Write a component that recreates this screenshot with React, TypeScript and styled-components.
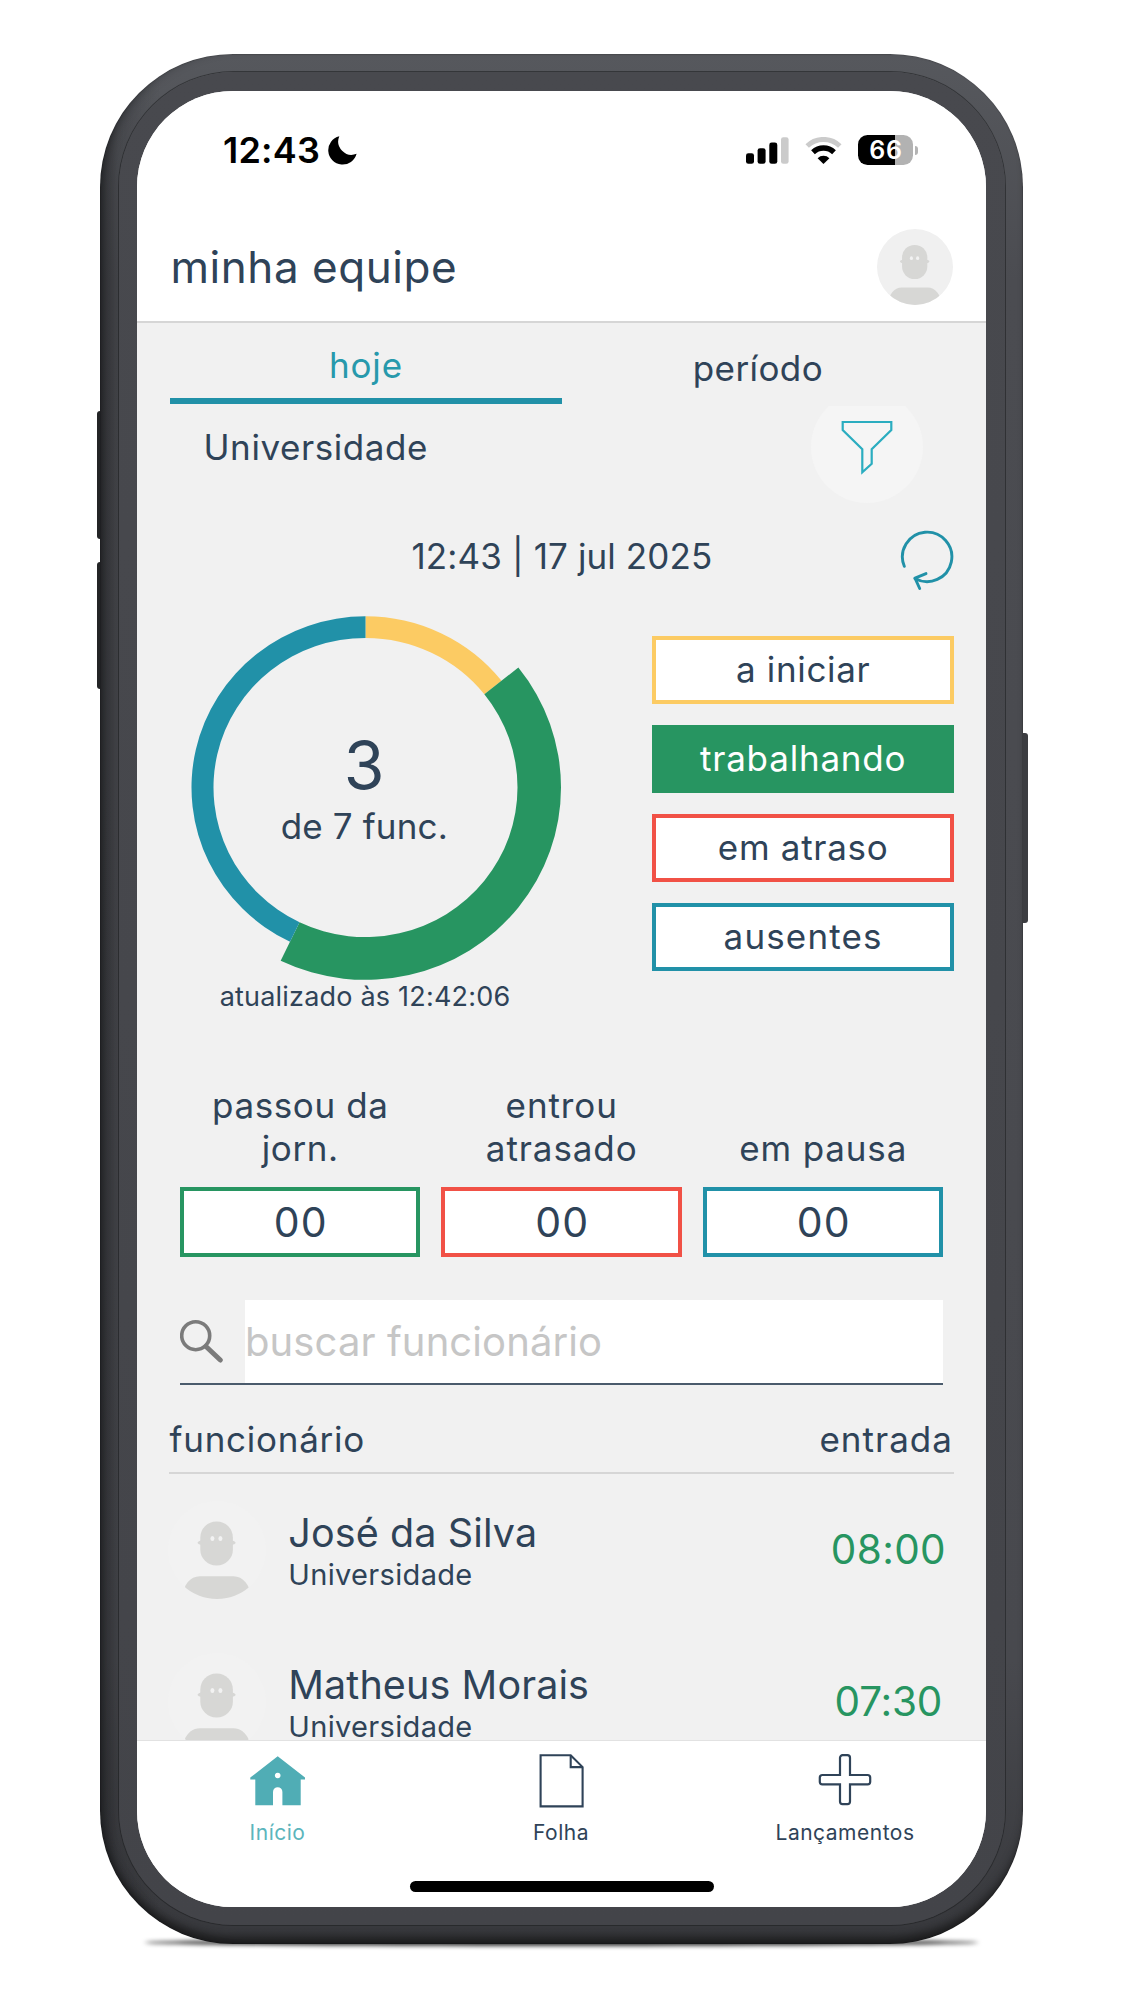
import React from "react";
import styled, { createGlobalStyle } from "styled-components";

const c = {
  ink: "#2f4358",
  teal: "#2191a8",
  green: "#279561",
  yellow: "#fccb63",
  red: "#f15146",
  navTeal: "#50adb5",
  canvas: "#f1f1f1",
  rule: "#d6d6d6",
  figure: "#d7d7d5",
};

const GlobalStyle = createGlobalStyle`
  * { box-sizing: border-box; }
  body { margin: 0; background: #fff; font-family: "Inter", "Roboto", sans-serif; color: ${c.ink}; }
  svg { display: block; flex: none; }
`;

const Page = styled.main`
  width: 1125px;
  height: 2000px;
  padding: 53.5px 0 0 100px;
  overflow: hidden;
  background: #fff;
`;

/* ---------- device ---------- */

const Phone = styled.div`
  position: relative;
  z-index: 0;
  width: 923.4px;
  height: 1890px;
`;

const GroundShadow = styled.div`
  position: absolute;
  z-index: -2;
  left: 44px;
  right: 44px;
  bottom: -2px;
  height: 7px;
  border-radius: 50%;
  background: rgba(0, 0, 0, 0.8);
  filter: blur(2px);
`;

const SideKey = styled.span<{ $side: "left" | "right"; $top: number; $height: number }>`
  position: absolute;
  z-index: -1;
  ${(p) => p.$side}: ${(p) => (p.$side === "left" ? -3 : -4.5)}px;
  top: ${(p) => p.$top}px;
  width: 12px;
  height: ${(p) => p.$height}px;
  border-radius: 3px;
  background: ${(p) => (p.$side === "left" ? "#232426" : "#3c3d41")};
`;

const Shell = styled.div`
  height: 100%;
  padding: 18.5px;
  border-radius: 133px;
  background:
    linear-gradient(90deg, rgba(24, 25, 27, 0.5), rgba(24, 25, 27, 0.2) 18px, transparent 60px),
    linear-gradient(#56585d, #4b4c51 12%, #48494e 85%, #38393d);
  box-shadow:
    inset 0 0 1px 0.5px rgba(0, 0, 0, 0.25),
    inset 10px 0 10px -7px rgba(20, 21, 23, 0.5),
    inset 0 -12px 10px -5px rgba(20, 20, 20, 0.8);
`;

const Bezel = styled.div`
  height: 100%;
  padding: 18.5px;
  border-radius: 115px;
  background: linear-gradient(#48494e, #46474c 50%, #434449);
  box-shadow: 0 0 0 1px rgba(30, 31, 34, 0.6);
`;

const Screen = styled.div`
  display: flex;
  flex-direction: column;
  height: 100%;
  overflow: hidden;
  border-radius: 96px;
  background: ${c.canvas};
`;

/* ---------- top ---------- */

const StatusBar = styled.div`
  flex: none;
  display: flex;
  align-items: center;
  justify-content: space-between;
  height: 119px;
  padding: 0 68px 0 86px;
  background: #fff;
  color: #000;
`;

const StatusGroup = styled.div<{ $gap: number }>`
  display: flex;
  align-items: center;
  gap: ${(p) => p.$gap}px;
`;

const Clock = styled.span`
  font-size: 36px;
  font-weight: 600;
  line-height: 40px;
  letter-spacing: 0.2px;
`;

const BatteryWrap = styled.div`
  display: flex;
  align-items: center;
  gap: 1.5px;
  &::after {
    content: "";
    width: 3.5px;
    height: 9px;
    border-radius: 0 4px 4px 0;
    background: #b4b4b4;
  }
`;

const Battery = styled.span`
  width: 55px;
  height: 30px;
  border-radius: 9.5px;
  background: linear-gradient(90deg, #000 67.5%, #b2b2b2 67.5%);
  color: #fff;
  font-size: 25px;
  font-weight: 600;
  line-height: 30px;
  letter-spacing: 0.6px;
  text-align: center;
`;

const Header = styled.header`
  flex: none;
  display: flex;
  align-items: center;
  justify-content: space-between;
  height: 113.5px;
  padding: 4px 33px 0 33.5px;
  border-bottom: 2.5px solid ${c.rule};
  background: #fff;
`;

const Title = styled.h1`
  margin: 0;
  font-size: 44px;
  font-weight: 400;
  line-height: 54px;
  letter-spacing: 0.55px;
`;

const Text = styled.span<{ $ls?: number }>`
  font-size: 35px;
  line-height: 43.3px;
  letter-spacing: ${(p) => p.$ls ?? 0.7}px;
  white-space: nowrap;
`;

/* ---------- content ---------- */

const Content = styled.section`
  flex: 1;
  min-height: 0;
  overflow: hidden;
  padding: 0 32.5px 0 33px;
`;

const Tabs = styled.nav`
  display: grid;
  grid-template-columns: 1fr 1fr;
  height: 81px;
`;

const Tab = styled.div<{ $active?: boolean }>`
  display: flex;
  align-items: center;
  justify-content: center;
  padding-top: 10.5px;
  color: ${(p) => (p.$active ? "#2799ac" : c.ink)};
  border-bottom: ${(p) => (p.$active ? `6.5px solid ${c.teal}` : "0")};
`;

const UnitRow = styled.div`
  display: flex;
  justify-content: space-between;
  height: 97.5px;
  margin-top: 1.5px;
  padding: 0 30.5px 0 33.5px;
  overflow: hidden;
  & > ${Text} { line-height: 82px; }
`;

const FilterButton = styled.div`
  display: flex;
  align-items: center;
  justify-content: center;
  width: 112px;
  height: 112px;
  margin-top: -15px;
  border-radius: 50%;
  background: #f5f5f5;
`;

const DateRow = styled.div`
  display: grid;
  grid-template-columns: 1fr auto 1fr;
  align-items: center;
  height: 107px;
  & > svg { grid-column: 3; justify-self: end; margin-top: 7px; }
  & > ${Text} { grid-column: 2; }
`;

const Overview = styled.div`
  display: flex;
  justify-content: space-between;
  height: 402.5px;
`;

const ChartColumn = styled.div`
  position: relative;
  display: flex;
  flex-direction: column;
  align-items: center;
  width: 390px;
`;

const ChartLabel = styled.div`
  position: absolute;
  inset: 125px 1.5px auto 0;
  display: flex;
  flex-direction: column;
  align-items: center;
  gap: 10px;
`;

const ChartValue = styled.span`
  font-size: 66px;
  line-height: 60px;
`;

const Updated = styled.span`
  font-size: 27px;
  line-height: 32px;
  letter-spacing: 0.2px;
`;

const StatusList = styled.div`
  display: flex;
  flex-direction: column;
  gap: 20.6px;
  width: 301.5px;
  padding-top: 25.5px;
`;

const StatusButton = styled.div<{ $color: string; $filled?: boolean }>`
  display: flex;
  align-items: center;
  justify-content: center;
  height: 68.5px;
  border: 4px solid ${(p) => p.$color};
  background: ${(p) => (p.$filled ? p.$color : "#fff")};
  color: ${(p) => (p.$filled ? "#fff" : c.ink)};
`;

const Counters = styled.div`
  display: grid;
  grid-template-columns: repeat(3, 1fr);
  gap: 21px;
  padding: 71.5px 10.5px 0 10px;
`;

const Counter = styled.div`
  display: flex;
  flex-direction: column;
  align-items: center;
  justify-content: flex-end;
`;

const CounterBox = styled.div<{ $color: string }>`
  width: 100%;
  height: 70.5px;
  margin-top: 16.4px;
  border: 4px solid ${(p) => p.$color};
  background: #fff;
  font-size: 41px;
  line-height: 63px;
  letter-spacing: 1.1px;
  text-indent: 1px;
  text-align: center;
`;

const Search = styled.div`
  display: flex;
  align-items: center;
  gap: 21px;
  margin: 42.5px 10.5px 0 10px;
  border-bottom: 2.5px solid #4a5b6c;
`;

const SearchField = styled.div`
  flex: 1;
  height: 83px;
  background: #fff;
  color: #c6c6c6;
  font-size: 40px;
  line-height: 83px;
  letter-spacing: 0.1px;
`;

const ListHead = styled.div`
  display: flex;
  justify-content: space-between;
  margin-left: -1px;
  padding: 22px 1px 0 0.5px;
  border-bottom: 2.5px solid ${c.rule};
  & > ${Text} { line-height: 65px; }
`;

const Row = styled.div`
  display: flex;
  align-items: center;
  height: 151.7px;
  margin-left: -1.7px;
`;

const Person = styled.div`
  flex: 1;
  display: flex;
  flex-direction: column;
  padding: 3px 0 0 22px;
`;

const Name = styled.span`
  font-size: 39.5px;
  line-height: 46px;
  letter-spacing: 0.1px;
`;

const Unit = styled.span`
  font-size: 29px;
  line-height: 37px;
  letter-spacing: 0.33px;
`;

const EntryTime = styled.span<{ $ls: number }>`
  width: 131px;
  color: ${c.green};
  font-size: 40.5px;
  line-height: 50px;
  letter-spacing: ${(p) => p.$ls}px;
  text-align: center;
`;

/* ---------- bottom bar ---------- */

const BottomBar = styled.footer`
  flex: none;
  height: 166.5px;
  border-top: 1.5px solid #e2e2e2;
  background: #fff;
`;

const NavItems = styled.div`
  display: grid;
  grid-template-columns: 281px 286px 282px;
`;

const NavItem = styled.div<{ $active?: boolean }>`
  display: flex;
  flex-direction: column;
  align-items: center;
  gap: 12px;
  padding-top: 13px;
  color: ${(p) => (p.$active ? "#5bb5bc" : c.ink)};
  font-size: 21px;
  line-height: 26px;
  letter-spacing: 0.5px;
`;

const HomeIndicator = styled.div`
  width: 304px;
  height: 11px;
  margin: 35px auto 0;
  border-radius: 6px;
  background: #000;
`;

/* ---------- drawings ---------- */

const Avatar = ({ size, disc }: { size: number; disc: string }) => {
  const clip = React.useId();
  return (
    <svg width={size} height={size} viewBox="0 0 98 98">
      <clipPath id={clip}><circle cx="49" cy="49" r="49" /></clipPath>
      <g clipPath={`url(#${clip})`}>
        <rect width="98" height="98" fill={disc} />
        <rect x="32.3" y="20.5" width="32.6" height="44" rx="16" fill={c.figure} />
        <ellipse cx="48.6" cy="41.8" rx="19" ry="3.8" fill={c.figure} />
        <path d="M14 98C15 84 22 75.3 32 75.3H65.5C75 75.3 82 84 84 98z" fill={c.figure} />
        <ellipse cx="44.4" cy="37.6" rx="2" ry="2.5" fill="#f2f2f2" />
        <ellipse cx="52.4" cy="37.6" rx="2" ry="2.5" fill="#f2f2f2" />
      </g>
    </svg>
  );
};

const Moon = () => (
  <svg width="29" height="29" viewBox="0 0 29 29">
    <path d="M11.3 .2A14.4 14.4 0 1 0 28.6 17.8A13.4 13.4 0 0 1 11.3 .2z" fill="#000" />
  </svg>
);

const Signal = () => (
  <svg width="43" height="27" viewBox="0 0 43 27">
    <rect x="0" y="16.2" width="8" height="10.6" rx="2.4" />
    <rect x="11.6" y="11.2" width="8" height="15.6" rx="2.4" />
    <rect x="23.3" y="5.6" width="8" height="21.2" rx="2.4" />
    <rect x="35" y="0.2" width="7.6" height="26.6" rx="2.4" fill="#cbcbcb" />
  </svg>
);

const Wifi = () => (
  <svg width="37" height="27" viewBox="0 0 37 27">
    <path d="M2.2 9A23.5 23.5 0 0 1 34.8 9" fill="none" stroke="#cbcbcb" strokeWidth="5" />
    <path d="M8 15.2A15.2 15.2 0 0 1 29 15.2" fill="none" stroke="#000" strokeWidth="5.4" />
    <path d="M18.5 27L12.6 21.2A8.4 8.4 0 0 1 24.4 21.2z" fill="#000" />
  </svg>
);

const FilterIcon = () => (
  <svg width="56" height="58" viewBox="0 0 56 58">
    <path d="M3.7 4H52.3V12L32.7 31.3V45.7L23.3 54.3V31.3L3.7 12z" fill="none" stroke="#2badc0" strokeWidth="2.2" />
  </svg>
);

const RefreshIcon = () => (
  <svg width="55" height="62" viewBox="0 0 55 62" fill="none" stroke={c.teal} strokeWidth="2.9" strokeLinecap="round" strokeLinejoin="round">
    <path d="M5.3 37.3A24.7 24.7 0 1 1 16 49.4" />
    <path d="M27 44.6L16 49.2L20.7 59.5" />
  </svg>
);

const SearchIcon = () => (
  <svg width="44" height="44" viewBox="0 0 44 44" fill="none" stroke="#7b7b7b" strokeLinecap="round">
    <circle cx="15.7" cy="16.7" r="14" strokeWidth="3.6" />
    <path d="M26 27.5L40.3 41" strokeWidth="5" />
  </svg>
);

const HomeIcon = () => (
  <svg width="59" height="54" viewBox="0 0 59 54">
    <path
      fillRule="evenodd"
      fill={c.navTeal}
      d="M29.7 2.2L57 23.6V25.5H52.7V51.2H34.4V37.9A4.7 4.7 0 0 0 25 37.9V51.2H7.3V25.5H2.3V23.6zM29.7 18.7a2.8 2.8 0 1 0 .01 0z"
    />
  </svg>
);

const SheetIcon = () => (
  <svg width="48" height="54" viewBox="0 0 48 54" fill="none" stroke={c.ink} strokeWidth="2.1">
    <path d="M3.6 1.2H33.7L45.6 13.1V52.4H3.6z" />
    <path d="M33.7 1.2V13.1H45.6" />
  </svg>
);

const PlusIcon = () => (
  <svg width="54" height="54" viewBox="0 0 54 54" fill="none" stroke={c.ink} strokeWidth="2.2">
    <path d="M22 3.8a2.6 2.6 0 0 1 2.6-2.6h4.8a2.6 2.6 0 0 1 2.6 2.6V21H49.6a2.6 2.6 0 0 1 2.6 2.6v4.2a2.6 2.6 0 0 1-2.6 2.6H32V47.6a2.6 2.6 0 0 1-2.6 2.6h-4.8a2.6 2.6 0 0 1-2.6-2.6V30.4H4.4a2.6 2.6 0 0 1-2.6-2.6v-4.2A2.6 2.6 0 0 1 4.4 21H22z" />
  </svg>
);

type Slice = { value: number; color: string; active?: boolean };

const slices: Slice[] = [
  { value: 1, color: c.yellow },
  { value: 3, color: c.green, active: true },
  { value: 3, color: c.teal },
];

const Donut = () => {
  const total = slices.reduce((sum, s) => sum + s.value, 0);
  const inner = 152;
  const at = (turn: number, r: number) => {
    const a = turn * Math.PI * 2;
    return `${(r * Math.sin(a)).toFixed(2)} ${(-r * Math.cos(a)).toFixed(2)}`;
  };
  let from = 0;
  return (
    <svg width="391" height="371" viewBox="-195.5 -177.5 391 371">
      <g transform="scale(1 .984)">
        {slices.map((s) => {
          const start = from / total;
          from += s.value;
          const end = from / total;
          const r = s.active ? 195.5 : 174;
          return (
            <path
              key={s.color}
              fill={s.color}
              d={`M${at(start, r)}A${r} ${r} 0 0 1 ${at(end, r)}L${at(end, inner)}A${inner} ${inner} 0 0 0 ${at(start, inner)}z`}
            />
          );
        })}
      </g>
    </svg>
  );
};

/* ---------- data ---------- */

const statuses = [
  { label: "a iniciar", color: c.yellow, ls: 0.65 },
  { label: "trabalhando", color: c.green, filled: true, ls: 0.8 },
  { label: "em atraso", color: c.red, ls: 0.7 },
  { label: "ausentes", color: c.teal, ls: 1.15 },
];

const counters = [
  { lines: ["passou da", "jorn."], color: c.green, ls: 0.6 },
  { lines: ["entrou", "atrasado"], color: c.red, ls: 0.9 },
  { lines: ["em pausa"], color: c.teal, ls: 0.85 },
];

const people = [
  { name: "José da Silva", unit: "Universidade", time: "08:00", ls: 0.35 },
  { name: "Matheus Morais", unit: "Universidade", time: "07:30", ls: -0.2 },
];

export default function App() {
  return (
    <Page>
      <GlobalStyle />
      <Phone>
        <GroundShadow />
        <SideKey $side="left" $top={357} $height={128} />
        <SideKey $side="left" $top={508.5} $height={127} />
        <SideKey $side="right" $top={679} $height={190} />
        <Shell>
          <Bezel>
            <Screen>
              <StatusBar>
                <StatusGroup $gap={8}>
                  <Clock>12:43</Clock>
                  <Moon />
                </StatusGroup>
                <StatusGroup $gap={16}>
                  <Signal />
                  <Wifi />
                  <BatteryWrap>
                    <Battery>66</Battery>
                  </BatteryWrap>
                </StatusGroup>
              </StatusBar>
              <Header>
                <Title>minha equipe</Title>
                <Avatar size={76} disc="#f0f0f0" />
              </Header>
              <Content>
                <Tabs>
                  <Tab $active><Text $ls={0.9}>hoje</Text></Tab>
                  <Tab><Text $ls={0.42}>período</Text></Tab>
                </Tabs>
                <UnitRow>
                  <Text $ls={0.58}>Universidade</Text>
                  <FilterButton><FilterIcon /></FilterButton>
                </UnitRow>
                <DateRow>
                  <Text $ls={0.12}>12:43 | 17 jul 2025</Text>
                  <RefreshIcon />
                </DateRow>
                <Overview>
                  <ChartColumn>
                    <Donut />
                    <ChartLabel>
                      <ChartValue>3</ChartValue>
                      <Text $ls={0.15}>de 7 func.</Text>
                    </ChartLabel>
                    <Updated>atualizado às 12:42:06</Updated>
                  </ChartColumn>
                  <StatusList>
                    {statuses.map((s) => (
                      <StatusButton key={s.label} $color={s.color} $filled={s.filled}>
                        <Text $ls={s.ls}>{s.label}</Text>
                      </StatusButton>
                    ))}
                  </StatusList>
                </Overview>
                <Counters>
                  {counters.map((k) => (
                    <Counter key={k.color}>
                      {k.lines.map((line) => <Text key={line} $ls={k.ls}>{line}</Text>)}
                      <CounterBox $color={k.color}>00</CounterBox>
                    </Counter>
                  ))}
                </Counters>
                <Search>
                  <SearchIcon />
                  <SearchField>buscar funcionário</SearchField>
                </Search>
                <ListHead>
                  <Text $ls={0.75}>funcionário</Text>
                  <Text $ls={1}>entrada</Text>
                </ListHead>
                {people.map((p) => (
                  <Row key={p.name}>
                    <Avatar size={98} disc="#f2f2f2" />
                    <Person>
                      <Name>{p.name}</Name>
                      <Unit>{p.unit}</Unit>
                    </Person>
                    <EntryTime $ls={p.ls}>{p.time}</EntryTime>
                  </Row>
                ))}
              </Content>
              <BottomBar>
                <NavItems>
                  <NavItem $active><HomeIcon />Início</NavItem>
                  <NavItem><SheetIcon />Folha</NavItem>
                  <NavItem><PlusIcon />Lançamentos</NavItem>
                </NavItems>
                <HomeIndicator />
              </BottomBar>
            </Screen>
          </Bezel>
        </Shell>
      </Phone>
    </Page>
  );
}
